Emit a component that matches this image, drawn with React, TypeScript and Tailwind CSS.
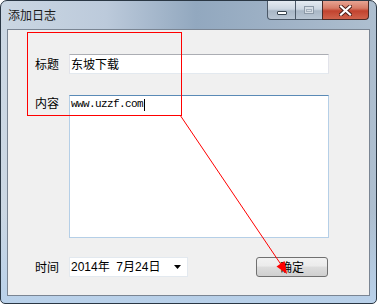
export default function App() {
  const cjk = { fontFamily: '"Noto Sans CJK SC", "Liberation Sans", sans-serif' }

  return (
    <div className="w-[377px] h-[304px] bg-white">
      <div className="relative w-[377px] h-[304px] rounded-t-[7px] rounded-b-[5px] border border-[#2a3744] bg-[linear-gradient(180deg,rgba(185,209,234,0)_70%,#b9d1ea_100%),linear-gradient(90deg,#cbd7e3_0%,#bccadb_28%,#92a8bf_52%,#9fb2c6_75%,#aebfd0_100%)] flex flex-col">
        {/* title bar */}
        <div className="h-[28px] flex items-start justify-between pl-[7px] pr-[7px]">
          <span className="mt-[6px] text-[12px] leading-[16px] text-[#1a1a1a]" style={cjk}>
            添加日志
          </span>
          <div className="flex h-[19px]">
            <div className="w-[29px] h-[19px] rounded-bl-[4px] border border-t-0 border-[#4b5867] bg-[linear-gradient(180deg,#e4eaf1_0%,#ccd6e1_45%,#a9b7c6_55%,#b9c6d4_100%)] flex items-end justify-center pb-[4px]">
              <div className="w-[10px] h-[4px] bg-white border border-[#38444f] rounded-[1px]" />
            </div>
            <div className="w-[26px] h-[19px] border-b border-[#4b5867] bg-[linear-gradient(180deg,#e4eaf1_0%,#ccd6e1_45%,#a9b7c6_55%,#b9c6d4_100%)] flex items-center justify-center">
              <div className="w-[10px] h-[8px] border border-[#8c99a7] bg-[#d6dde5] flex items-center justify-center">
                <div className="w-[6px] h-[3px] border border-[#a4b0bd]" />
              </div>
            </div>
            <div className="w-[47px] h-[19px] rounded-br-[4px] border border-t-0 border-[#4b2a26] bg-[linear-gradient(180deg,#e8a493_0%,#d77b66_40%,#c2432f_55%,#d0634c_100%)] flex items-center justify-center">
              <svg width="13" height="11" viewBox="0 0 13 11">
                <path d="M2 1.5 L11 9.5 M11 1.5 L2 9.5" stroke="#4a1c16" strokeWidth="4" strokeLinecap="square" />
                <path d="M2 1.5 L11 9.5 M11 1.5 L2 9.5" stroke="#ffffff" strokeWidth="2.2" strokeLinecap="square" />
              </svg>
            </div>
          </div>
        </div>

        {/* client area */}
        <div className="mx-[6px] w-[363px] h-[267px] border border-[#7a8593] bg-[#f0f0f0] pl-[27px] pt-[24px] text-[12px] text-black" style={cjk}>
          <div className="flex items-center h-[20px]">
            <span className="w-[34px] leading-[14px]">标题</span>
            <div className="w-[260px] h-[20px] bg-white border border-[#e2e3ea] border-t-[#abadb3] border-b-[#e3e9ef] pl-[1px] flex items-center leading-[14px] text-[12px]">
              东坡下载
            </div>
          </div>

          <div className="flex items-start mt-[21px]">
            <span className="w-[34px] leading-[14px] pt-[1px]">内容</span>
            <div className="w-[260px] h-[143px] bg-white border border-[#b5cfe7] border-t-[#5a8ab6] pl-[1px] pt-[2px]">
              <div className="flex items-center h-[13px]">
                <span
                  className="text-[11px] leading-[13px] tracking-[-0.6px]"
                  style={{ fontFamily: '"Liberation Mono", monospace' }}
                >
                  www.uzzf.com
                </span>
                <span className="ml-[1px] w-px h-[12px] bg-black" />
              </div>
            </div>
          </div>

          <div className="flex items-center mt-[19px]">
            <span className="w-[34px] leading-[14px]">时间</span>
            <div className="w-[119px] h-[20px] bg-white border border-[#e3e9ef] pl-[1px] pr-[6px] flex items-center justify-between">
              <span className="leading-[14px] whitespace-pre" style={{ fontFamily: '"Liberation Sans", "Noto Sans CJK SC", sans-serif' }}>
                {'2014年  7月24日'}
              </span>
              <svg width="7" height="4" viewBox="0 0 7 4">
                <path d="M0 0 H7 L3.5 4 Z" fill="#000" />
              </svg>
            </div>
            <div className="ml-[68px] w-[72px] h-[20px] rounded-[3px] border border-[#707070] bg-[linear-gradient(180deg,#f2f2f2_0%,#ebebeb_45%,#dddddd_50%,#cfcfcf_100%)] flex items-center justify-center leading-[14px]">
              确定
            </div>
          </div>
        </div>

        {/* annotation overlay */}
        <svg
          className="absolute left-[-1px] top-[-1px] pointer-events-none"
          width="377"
          height="304"
          viewBox="0 0 377 304"
        >
          <rect x="27.5" y="32.5" width="154" height="83" fill="none" stroke="#ff0000" strokeWidth="1" shapeRendering="crispEdges" />
          <line x1="180" y1="115" x2="282" y2="266" stroke="#ff0000" strokeWidth="1" />
          <polygon points="287,274 284.5,261 276.5,266.5" fill="#ff0000" />
        </svg>
      </div>
    </div>
  )
}
